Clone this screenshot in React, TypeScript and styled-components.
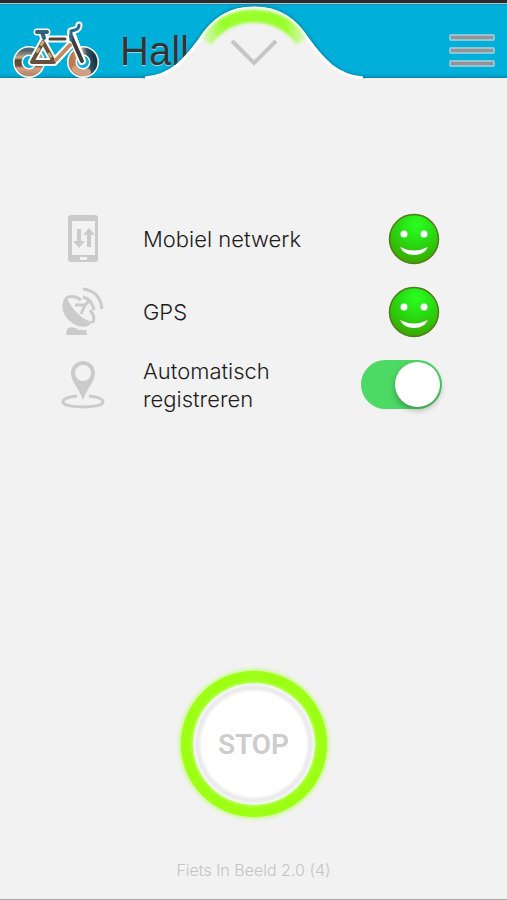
import React, { useState } from "react";
import styled, { createGlobalStyle } from "styled-components";

const GlobalStyle = createGlobalStyle`
  *, *::before, *::after { box-sizing: border-box; }
  body {
    margin: 0;
    background: #f2f2f2;
    font-family: Inter, "Liberation Sans", Arial, sans-serif;
    color: #1c1c1c;
  }
  button { font: inherit; border: 0; padding: 0; cursor: pointer; }
`;

const Screen = styled.div`
  min-height: 100vh;
  display: flex;
  flex-direction: column;
  border-bottom: 1px solid #a8a8a8;
`;

const Header = styled.header`
  position: relative;
  height: 78px;
  display: flex;
  align-items: flex-end;
  justify-content: space-between;
  padding: 0 12px 0 9px;
  background: linear-gradient(to top, #0a7fa2 0, #00a3cc 2px, #00afda 5px);
  border-top: 3px solid #2b2b2b;
  box-shadow: inset 0 1px 0 #a9c9d2, inset 0 2px 0 #1b8fb0;
`;

const Brand = styled.div`
  display: flex;
  align-items: flex-end;
  gap: 19px;
`;

const Title = styled.h1`
  margin: 0;
  padding-bottom: 4px;
  font-family: "Liberation Sans", Arial, sans-serif;
  font-size: 40px;
  line-height: 46px;
  font-weight: 400;
  color: #333;
  text-shadow: 0 1px 1px #9fd6e6;
`;

const MenuButton = styled.button`
  width: 46px;
  display: grid;
  gap: 6px;
  margin-bottom: 11px;
  background: none;
`;

const MenuBar = styled.span`
  height: 7px;
  border: 2px solid #8dc6d6;
  border-radius: 2px;
  background: #9a9292;
`;

const PullTab = styled.button`
  position: absolute;
  left: 50%;
  top: 0;
  transform: translateX(-50%);
  width: 226px;
  height: 76px;
  background: none;
  svg { display: block; }
`;

const Main = styled.main`
  flex: 1;
  display: flex;
  flex-direction: column;
  justify-content: space-between;
  padding-top: 124px;
`;

const StatusList = styled.ul`
  list-style: none;
  margin: 0;
  padding: 0 65px 0 61px;
`;

const StatusRow = styled.li`
  min-height: 73px;
  display: grid;
  grid-template-columns: 44px 1fr 81px;
  column-gap: 38px;
  align-items: center;
  svg { display: block; }
`;

const StatusLabel = styled.label`
  font-weight: 300;
  font-size: 22px;
  line-height: 28px;
`;

const StatusValue = styled.div`
  display: flex;
  justify-content: flex-end;
`;

const Toggle = styled.input`
  appearance: none;
  margin: 0;
  width: 81px;
  height: 49px;
  padding: 2px;
  display: flex;
  border-radius: 25px;
  background: #c8c8c8;
  cursor: pointer;
  &::before {
    content: "";
    width: 45px;
    height: 45px;
    border-radius: 50%;
    background: #fff;
    box-shadow: 0 3px 6px rgba(0, 0, 0, 0.3);
  }
  &:checked {
    background: #4cd964;
    justify-content: flex-end;
  }
`;

const Bottom = styled.footer`
  display: flex;
  flex-direction: column;
  align-items: center;
  gap: 42px;
  padding-bottom: 18px;
`;

const StopButton = styled.button`
  width: 146px;
  height: 146px;
  padding: 12px;
  border-radius: 50%;
  background: #9dff14;
  box-shadow: 0 0 4px 1px #b4ff50;
`;

const StopFace = styled.span`
  height: 100%;
  display: grid;
  place-items: center;
  border-radius: 50%;
  background: radial-gradient(circle closest-side, #fff 0 85%, #ebebee 91% 94%, #f3f5ee 97%);
  box-shadow: 0 0 3px 1px #c4ff78;
  color: #ccc;
  font-family: Roboto, sans-serif;
  font-size: 28px;
  font-weight: 600;
`;

const Version = styled.p`
  margin: 0;
  font-weight: 300;
  font-size: 16px;
  line-height: 22px;
  color: #c4c4c4;
`;

const Bicycle = () => (
  <svg width="92" height="58" viewBox="10 20 92 58" aria-hidden="true">
    <defs>
      <linearGradient id="rim" x1="0" y1="0" x2="0" y2="1">
        <stop offset="0" stopColor="#506574" />
        <stop offset="0.3" stopColor="#c4ae8b" />
        <stop offset="0.42" stopColor="#584635" />
        <stop offset="0.68" stopColor="#6b5140" />
        <stop offset="0.78" stopColor="#d4a384" />
        <stop offset="1" stopColor="#b88b70" />
      </linearGradient>
      <linearGradient id="rim2" x1="0" y1="0.2" x2="1" y2="0">
        <stop offset="0" stopColor="#ba7b53" />
        <stop offset="0.45" stopColor="#dbb599" />
        <stop offset="0.7" stopColor="#285068" />
        <stop offset="1" stopColor="#20313e" />
      </linearGradient>
    </defs>
    <g fill="none" stroke="#fff" strokeLinecap="round" strokeLinejoin="round">
      <circle cx="30" cy="62" r="11" strokeWidth="10" />
      <circle cx="84" cy="62" r="11" strokeWidth="10" />
      <path d="M38 32H48M43 32 45 41M49 39H70M44 41 33 62H55L44 41M56 61 72 44M72 31 83 61M72 31 76 30Q80 29 80 25" strokeWidth="7" />
    </g>
    <g fill="none" strokeLinecap="round" strokeLinejoin="round">
      <circle cx="30" cy="62" r="11" stroke="url(#rim)" strokeWidth="7" />
      <circle cx="84" cy="62" r="11" stroke="url(#rim2)" strokeWidth="7" />
      <path d="M76 69A11 11 0 0 0 89 72" stroke="#d0a184" strokeWidth="6" />
      <path d="M44 42 33 62H55L44 42M56 61 72 44M72 33 83 61" stroke="#fff" strokeWidth="8" />
      <path d="M38 32H48M43 32 45 38" stroke="#35617a" strokeWidth="4" />
      <path d="M51 39H66" stroke="#524336" strokeWidth="3" />
      <path d="M44 42 33 62H55L44 42" stroke="#68513c" strokeWidth="4" />
      <path d="M44 42 38 52M50 54 54 60" stroke="#c2a87a" strokeWidth="3" strokeDasharray="3 5" />
      <path d="M57 60 71 45" stroke="#c08a60" strokeWidth="4" />
      <path d="M72 36 83 61" stroke="#403c3b" strokeWidth="4" />
      <path d="M72 40V31L76 30Q80 29 80 25" stroke="#216c90" strokeWidth="3" />
    </g>
  </svg>
);

const PullTabShape = () => (
  <svg width="226" height="76" viewBox="141 3 226 76" aria-hidden="true">
    <defs>
      <linearGradient id="arcFade" gradientUnits="userSpaceOnUse" x1="202" y1="0" x2="306" y2="0">
        <stop offset="0" stopColor="#99ff2b" stopOpacity="0.2" />
        <stop offset="0.2" stopColor="#99ff2b" />
        <stop offset="0.8" stopColor="#99ff2b" />
        <stop offset="1" stopColor="#99ff2b" stopOpacity="0.2" />
      </linearGradient>
      <filter id="arcGlow" x="-20%" y="-50%" width="140%" height="200%">
        <feGaussianBlur stdDeviation="1.5" />
      </filter>
      <filter id="edge" x="-10%" y="-10%" width="120%" height="120%">
        <feGaussianBlur stdDeviation="1.5" />
      </filter>
    </defs>
    <path
      d="M143 78C170 76 183 60 198 40C212 18 228 7 254 7C280 7 296 18 310 40C325 60 338 76 365 78"
      fill="none" stroke="#006f92" strokeOpacity="0.6" strokeWidth="3" filter="url(#edge)"
    />
    <path
      d="M141 79C170 76 183 60 198 40C212 18 228 7 254 7C280 7 296 18 310 40C325 60 338 76 367 79Z"
      fill="#f2f2f2"
    />
    <path
      d="M145 78C171 76 185 60 199 41C213 19 229 8 254 8C279 8 295 19 309 41C323 60 337 76 363 78"
      fill="none" stroke="#fff" strokeWidth="3"
    />
    <path d="M206 41Q224 16 254 16T302 41" fill="none" stroke="url(#arcFade)" strokeWidth="13" filter="url(#arcGlow)" />
    <path d="M232 41 254 63 276 41" fill="none" stroke="#c5c5c5" strokeWidth="4" />
  </svg>
);

const PhoneIcon = () => (
  <svg width="44" height="50" viewBox="0 0 44 50" fill="#cbcbcb" aria-hidden="true">
    <path fillRule="evenodd" d="M10 1H34Q37 1 37 4V45Q37 48 34 48H10Q7 48 7 45V4Q7 1 10 1ZM11 7V41H34V7ZM19 43V46H26V43Z" />
    <path d="M16 15H20V27H24L18 34L12 27H16ZM26 33V21H22L28 14L34 21H30V33Z" />
  </svg>
);

const DishIcon = () => (
  <svg width="44" height="50" viewBox="0 0 44 50" fill="none" stroke="#cbcbcb" aria-hidden="true">
    <path d="M5 10C-1 18 2 30 12 36C20 41 28 40 31 35C22 34 10 23 5 10Z" fill="#cbcbcb" strokeWidth="1" />
    <path d="M5 11C11 8 16 10 20 13M29 23C34 29 34 33 31 36" strokeWidth="3" />
    <path d="M14 18 24 18 20 27M24 18 28 14" strokeWidth="3" />
    <path d="M22 10Q31 12 33 23M22 2Q39 4 41 22" strokeWidth="3" />
    <path d="M7 41Q13 39 18 43H25Q26 45 26 48H5Q5 44 7 41Z" fill="#cbcbcb" stroke="none" />
  </svg>
);

const PinIcon = () => (
  <svg width="44" height="50" viewBox="0 0 44 50" aria-hidden="true">
    <path
      d="M16 36C7 37 2 39 2 42C2 45 11 47 22 47S42 45 42 42C42 39 37 37 28 36"
      fill="none" stroke="#cbcbcb" strokeWidth="3"
    />
    <path
      fillRule="evenodd"
      d="M22 1A12 12 0 0 1 34 13C34 22 26 28 22 40C18 28 10 22 10 13A12 12 0 0 1 22 1ZM22 5A8 8 0 1 0 22 21A8 8 0 1 0 22 5Z"
      fill="#cbcbcb"
    />
  </svg>
);

const Smiley = ({ id, label }: { id: string; label: string }) => (
  <svg width="56" height="52" viewBox="0 0 56 52" role="img" aria-label={label}>
    <defs>
      <radialGradient id={id} cx="0.55" cy="0.22" r="0.8">
        <stop offset="0" stopColor="#2bff20" />
        <stop offset="0.45" stopColor="#28dc12" />
        <stop offset="1" stopColor="#3ca400" />
      </radialGradient>
    </defs>
    <circle cx="28" cy="26" r="24.5" fill={`url(#${id})`} stroke="#4f7d18" strokeWidth="1.5" />
    <circle cx="18" cy="21" r="3.5" fill="#fff" />
    <circle cx="38" cy="21" r="3.5" fill="#fff" />
    <path d="M14 34Q28 41 42 34Q38 42 28 42T14 34Z" fill="#fff" />
  </svg>
);

export default function App() {
  const [auto, setAuto] = useState(true);
  return (
    <>
      <GlobalStyle />
      <Screen>
        <Header>
          <Brand>
            <Bicycle />
            <Title>Hall</Title>
          </Brand>
          <PullTab type="button" aria-label="Paneel openen">
            <PullTabShape />
          </PullTab>
          <MenuButton type="button" aria-label="Menu">
            <MenuBar />
            <MenuBar />
            <MenuBar />
          </MenuButton>
        </Header>
        <Main>
          <StatusList>
            <StatusRow>
              <PhoneIcon />
              <StatusLabel as="span">Mobiel netwerk</StatusLabel>
              <StatusValue><Smiley id="network" label="Actief" /></StatusValue>
            </StatusRow>
            <StatusRow>
              <DishIcon />
              <StatusLabel as="span">GPS</StatusLabel>
              <StatusValue><Smiley id="gps" label="Actief" /></StatusValue>
            </StatusRow>
            <StatusRow>
              <PinIcon />
              <StatusLabel htmlFor="auto">Automatisch registreren</StatusLabel>
              <StatusValue>
                <Toggle id="auto" type="checkbox" checked={auto} onChange={(e) => setAuto(e.target.checked)} />
              </StatusValue>
            </StatusRow>
          </StatusList>
          <Bottom>
            <StopButton type="button">
              <StopFace>STOP</StopFace>
            </StopButton>
            <Version>Fiets In Beeld 2.0 (4)</Version>
          </Bottom>
        </Main>
      </Screen>
    </>
  );
}
